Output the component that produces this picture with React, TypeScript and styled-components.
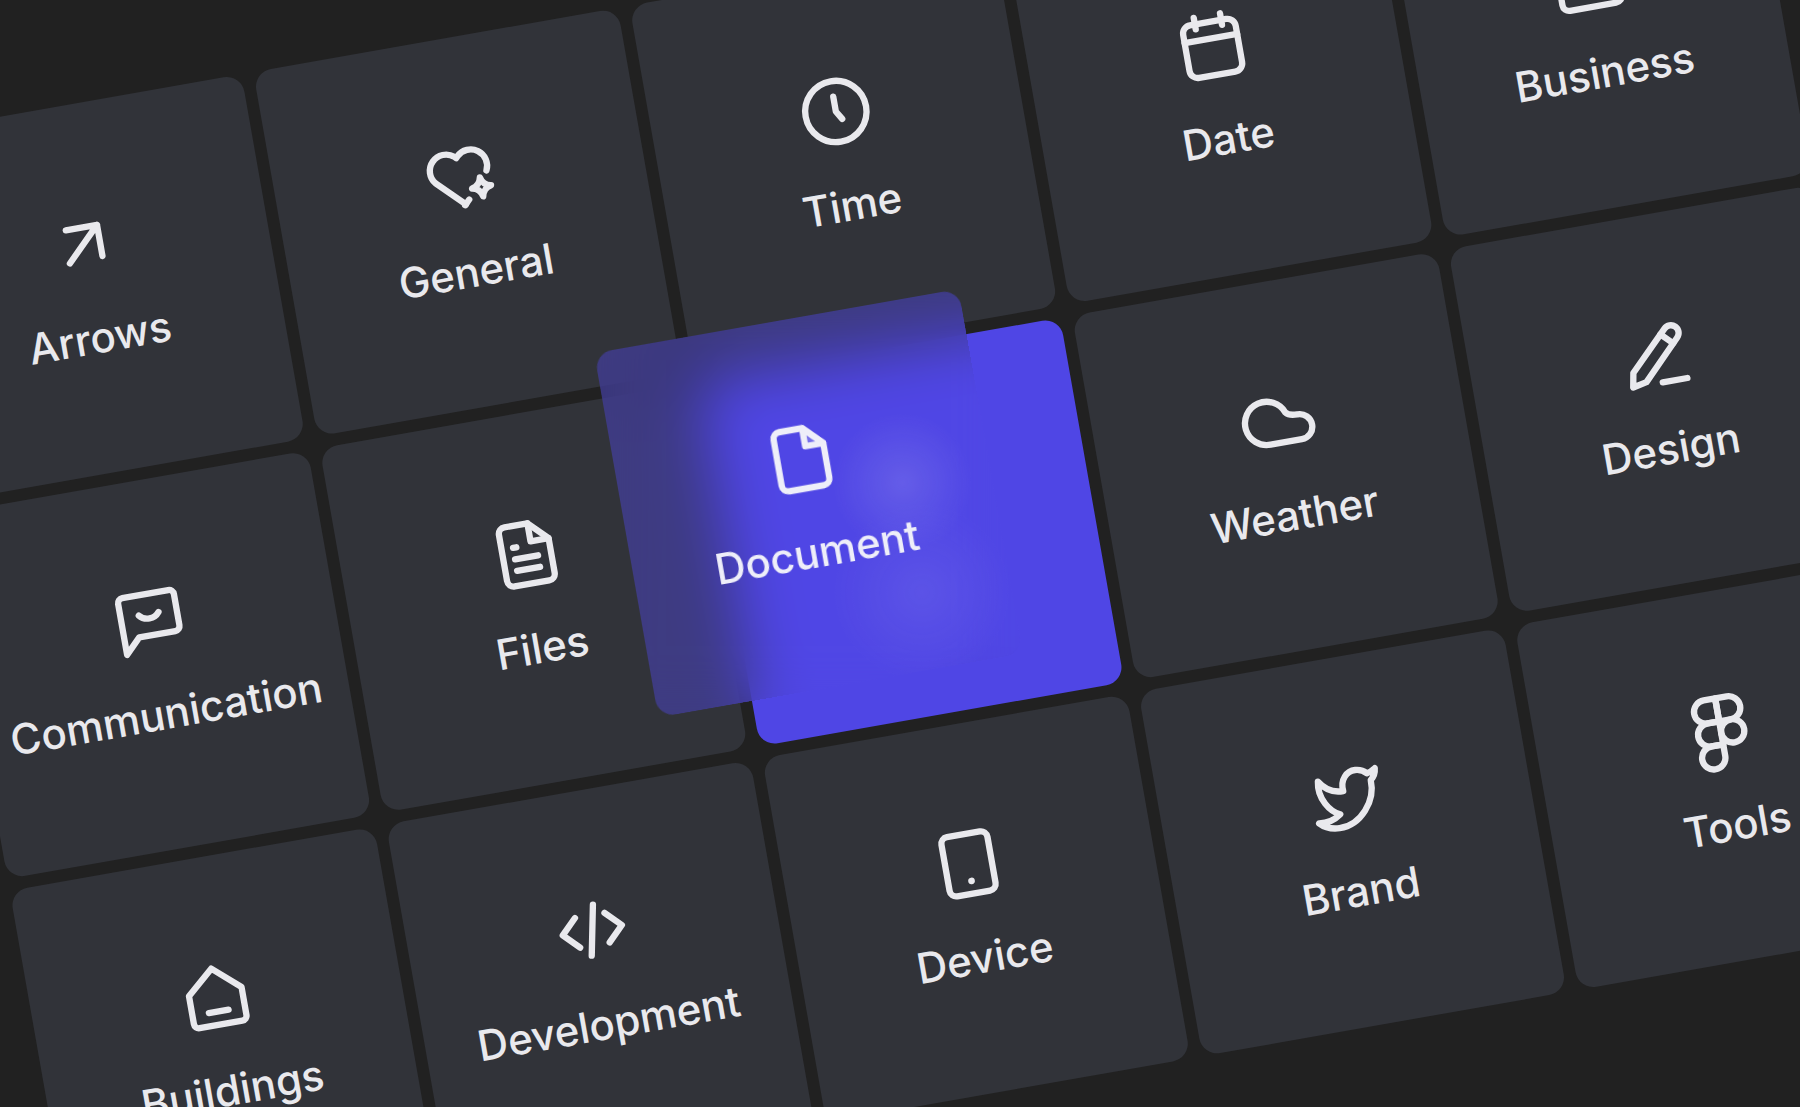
import React from "react";
import styled, { createGlobalStyle } from "styled-components";

const GlobalStyle = createGlobalStyle`
  html, body {
    margin: 0;
    padding: 0;
    background: #212121;
  }
`;

const Page = styled.main`
  width: 100vw;
  height: 100vh;
  overflow: hidden;
  display: flex;
  align-items: center;
  justify-content: center;
  background: #212121;
`;

const Board = styled.div`
  flex: none;
  display: grid;
  grid-template-columns: repeat(5, 370px);
  grid-auto-rows: 370px;
  gap: 12px;
  transform: translate(10px, -22px) rotate(-10deg);
`;

const Tile = styled.div`
  display: flex;
  flex-direction: column;
  align-items: center;
  justify-content: center;
  gap: 31px;
  box-sizing: border-box;
  padding: 0 0 11px 0;
  border-radius: 18px;
  background: #313339;
  color: #e9e9ed;
`;

const DropSlot = styled.div`
  position: relative;
  border-radius: 18px;
  background: #4f46e5;
`;

const DraggedTile = styled(Tile)`
  position: absolute;
  left: -95px;
  top: -46px;
  width: 370px;
  height: 370px;
  z-index: 2;
  color: #eeeef9;
  background:
    radial-gradient(circle at 76% 49%, rgba(255, 255, 255, 0.12), transparent 70px),
    radial-gradient(circle at 76% 79%, rgba(255, 255, 255, 0.07), transparent 90px),
    rgba(79, 70, 229, 0.42);
  backdrop-filter: blur(30px);
`;

const Label = styled.span`
  font-family: Inter, "Liberation Sans", sans-serif;
  font-size: 42px;
  font-weight: 500;
  line-height: 48px;
`;

const Glyph = styled.svg.attrs({
  viewBox: "0 0 24 24",
  fill: "none",
})`
  display: block;
  width: 80px;
  height: 80px;
  stroke: currentColor;
  stroke-width: 1.9;
  stroke-linecap: round;
  stroke-linejoin: round;
`;

const Dot = styled.circle`
  fill: currentColor;
  stroke: none;
`;

const icons: Record<string, React.ReactNode> = {
  Arrows: <path d="M7 17 17 7M7.500 7H17v9.500" />,
  General: (
    <>
      <path d="M12.500 20.200 4.600 12.400a4.900 4.900 0 0 1 6.900-6.900l.5.5.5-.5a4.900 4.900 0 0 1 7.800 5.700" />
      <path d="m12.200 20.400 1.500-1.500" />
      <path d="M18 12.900q.5 2.500 2.900 2.900-2.400.4-2.900 2.900-.5-2.500-2.900-2.900 2.400-.4 2.900-2.900z" />
    </>
  ),
  Time: (
    <>
      <circle cx="12" cy="12" r="9.200" />
      <path d="M12 7.500V12l1.500 2.500" />
    </>
  ),
  Date: (
    <>
      <rect x="4" y="5" width="16" height="16" rx="2.500" />
      <path d="M4 10h16M8 3v3.500M16 3v3.500" />
    </>
  ),
  Business: (
    <>
      <rect x="3" y="7.500" width="18" height="13" rx="2" />
      <path d="M8.500 7.500V6a2 2 0 0 1 2-2h3a2 2 0 0 1 2 2v1.500M3 13h18" />
    </>
  ),
  Communication: (
    <>
      <path d="M3.500 5.500A1.500 1.500 0 0 1 5 4h14a1.500 1.500 0 0 1 1.500 1.500V15a1.500 1.500 0 0 1-1.500 1.500H8L3.500 21z" />
      <path d="M9 10c1.500 1.900 4.500 1.900 6 0" />
    </>
  ),
  Files: (
    <>
      <path d="M7 3h7l5.500 5.500V19a2 2 0 0 1-2 2H7a2 2 0 0 1-2-2V5a2 2 0 0 1 2-2z" />
      <path d="M14 3v5.500h5.500M8.500 9.500h1M8.500 13h7M8.500 16.500h7" />
    </>
  ),
  Document: (
    <>
      <path d="M7 3h7l5.500 5.500V19a2 2 0 0 1-2 2H7a2 2 0 0 1-2-2V5a2 2 0 0 1 2-2z" />
      <path d="M14 3v5.500h5.500z" fill="currentColor" fillOpacity="0.25" />
    </>
  ),
  Weather: (
    <path d="M8.500 18.500H18a3.800 3.800 0 0 0 0-7.600h-.1c-1.400 0-2.600-.2-3.400-1.200A6.500 6.500 0 1 0 8.500 18.500z" />
  ),
  Design: (
    <>
      <path d="M4 20.500l.8-4.300L16.300 4.700a2.300 2.300 0 0 1 3.300 3.300L8.200 19.600z" />
      <path d="M14.800 6.200l3.300 3.300M13 20.500h7.500" />
    </>
  ),
  Buildings: (
    <>
      <path d="M4 10.500 12 3.500l8 7V19a1.500 1.500 0 0 1-1.500 1.500h-13A1.500 1.500 0 0 1 4 19z" />
      <path d="M9 16.500h6" />
    </>
  ),
  Development: <path d="M7.500 7.500 3 12l4.500 4.500M16.500 7.500 21 12l-4.500 4.500M13.500 4.500l-3 15" />,
  Device: (
    <>
      <rect x="5" y="3" width="14" height="18" rx="2" />
      <Dot cx="12" cy="17.200" r="1" />
    </>
  ),
  Brand: (
    <path d="M4.900 5.900C6.500 8.500 9 10 11.900 10 11.500 6.500 14 4.200 16.500 4.400 18 4.500 19.200 5.300 19.800 6 20.800 5.800 21.800 5.300 22.400 4.900 22.300 6.200 21.600 7.400 20.600 8.200 20.900 14.500 15.500 21 8.900 20.800 6.800 20.700 4.500 19.800 3.100 18.300 5.500 18.700 8 18 9.800 16.700 7 15.500 3.800 11 4.900 5.900z" />
  ),
  Tools: (
    <>
      <path d="M5 5.500A3.500 3.500 0 0 1 8.500 2H12v7H8.500A3.500 3.500 0 0 1 5 5.500z" />
      <path d="M12 2h3.500a3.500 3.500 0 1 1 0 7H12V2z" />
      <path d="M12 12.500a3.500 3.500 0 1 1 7 0 3.500 3.500 0 1 1-7 0z" />
      <path d="M5 19.500A3.500 3.500 0 0 1 8.500 16H12v3.500a3.500 3.500 0 1 1-7 0z" />
      <path d="M5 12.500A3.500 3.500 0 0 1 8.500 9H12v7H8.500A3.500 3.500 0 0 1 5 12.500z" />
    </>
  ),
};

const categories = [
  "Arrows",
  "General",
  "Time",
  "Date",
  "Business",
  "Communication",
  "Files",
  "Document",
  "Weather",
  "Design",
  "Buildings",
  "Development",
  "Device",
  "Brand",
  "Tools",
];

function TileContent({ name }: { name: string }) {
  return (
    <>
      <Glyph>{icons[name]}</Glyph>
      <Label>{name}</Label>
    </>
  );
}

export default function App() {
  return (
    <Page>
      <GlobalStyle />
      <Board>
        {categories.map((name) =>
          name === "Document" ? (
            <DropSlot key={name}>
              <DraggedTile>
                <TileContent name={name} />
              </DraggedTile>
            </DropSlot>
          ) : (
            <Tile key={name}>
              <TileContent name={name} />
            </Tile>
          ),
        )}
      </Board>
    </Page>
  );
}
